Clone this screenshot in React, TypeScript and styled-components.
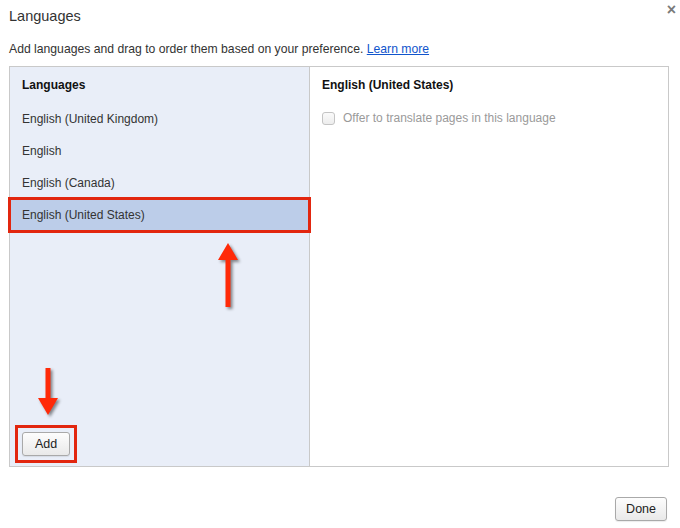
import React from "react";
import styled, { createGlobalStyle } from "styled-components";

const GlobalStyle = createGlobalStyle`
  html, body {
    margin: 0;
    padding: 0;
    background: #ffffff;
  }
  body {
    font-family: "Liberation Sans", Arial, Helvetica, sans-serif;
    color: #222;
  }
`;

const ANNOTATION_RED = "#e2260f";

const languages = [
  "English (United Kingdom)",
  "English",
  "English (Canada)",
  "English (United States)",
];

const selected = "English (United States)";

const Arrow = ({ direction }: { direction: "up" | "down" }) => (
  <svg width="32" height="72" viewBox="0 0 32 72">
    {direction === "up" ? (
      <path d="M16 3 L26 20 L18.5 20 L18.5 67 L13.5 67 L13.5 20 L6 20 Z" fill="#ff2a08" />
    ) : (
      <path d="M13.5 3 L18.5 3 L18.5 33 L26 33 L16 50 L6 33 L13.5 33 Z" fill="#ff2a08" />
    )}
  </svg>
);

const App = () => {
  return (
    <>
      <GlobalStyle />
      <Dialog>
        <Header>
          <Title>Languages</Title>
          <Close aria-label="close">×</Close>
        </Header>
        <Description>
          Add languages and drag to order them based on your preference.{" "}
          <a href="#">Learn more</a>
        </Description>

        <Panel>
          <LeftColumn>
            <ListHeader>Languages</ListHeader>
            {languages.map((lang) => (
              <LangRow key={lang} $active={lang === selected}>
                {lang}
              </LangRow>
            ))}
            <Spacer />
            <AddRow>
              <Highlight>
                <Button>Add</Button>
              </Highlight>
            </AddRow>

            <ArrowMark $left={202} $top={173}>
              <Arrow direction="up" />
            </ArrowMark>
            <ArrowMark $left={22} $top={298}>
              <Arrow direction="down" />
            </ArrowMark>
          </LeftColumn>

          <RightColumn>
            <DetailTitle>{selected}</DetailTitle>
            <CheckRow>
              <Checkbox type="checkbox" disabled />
              <span>Offer to translate pages in this language</span>
            </CheckRow>
          </RightColumn>
        </Panel>

        <Footer>
          <Button>Done</Button>
        </Footer>
      </Dialog>
    </>
  );
};

export default App;

const Dialog = styled.div`
  width: 680px;
  height: 528px;
  box-sizing: border-box;
  padding: 0 11px 0 9px;
  display: flex;
  flex-direction: column;
`;

const Header = styled.div`
  display: flex;
  justify-content: space-between;
  align-items: flex-start;
  padding-top: 8px;
`;

const Title = styled.h1`
  margin: 0;
  font-size: 14.5px;
  line-height: 16px;
  font-weight: normal;
  color: #333;
`;

const Close = styled.span`
  margin: -6px -7px 0 0;
  font-size: 16px;
  line-height: 16px;
  font-weight: bold;
  color: #7a7a7a;
`;

const Description = styled.p`
  margin: 18px 0 0;
  font-size: 12.2px;
  line-height: 15px;
  color: #333;

  a {
    color: #1155cc;
    text-decoration: underline;
  }
`;

const Panel = styled.div`
  margin-top: 9px;
  height: 401px;
  box-sizing: border-box;
  border: 1px solid #c9c9c9;
  display: grid;
  grid-template-columns: 300px 1fr;
`;

const LeftColumn = styled.div`
  position: relative;
  background: #e9eef8;
  border-right: 1px solid #c9c9c9;
  display: flex;
  flex-direction: column;
`;

const ListHeader = styled.div`
  height: 36px;
  line-height: 36px;
  padding-left: 12px;
  font-size: 12px;
  font-weight: bold;
  color: #111;
`;

const LangRow = styled.div<{ $active?: boolean }>`
  height: 32px;
  line-height: 32px;
  padding-left: 12px;
  font-size: 12px;
  color: #333;
  background: ${(p) => (p.$active ? "#bccde9" : "transparent")};
  outline: ${(p) => (p.$active ? `3px solid ${ANNOTATION_RED}` : "none")};
  outline-offset: -1px;
`;

const Spacer = styled.div`
  flex: 1;
`;

const AddRow = styled.div`
  padding: 0 0 3px 5px;
`;

const Highlight = styled.span`
  display: inline-block;
  padding: 4px;
  border: 3px solid ${ANNOTATION_RED};
  line-height: 0;
`;

const Button = styled.button`
  height: 24px;
  padding: 0 10px;
  min-width: 48px;
  font-family: "Liberation Sans", Arial, sans-serif;
  font-size: 12.5px;
  line-height: 22px;
  color: #222;
  border: 1px solid #a9a9a9;
  border-radius: 3px;
  background: linear-gradient(#fdfdfd, #e9e9e9);
  box-shadow: 0 1px 1px rgba(0, 0, 0, 0.08);
`;

const ArrowMark = styled.div<{ $left: number; $top: number }>`
  position: absolute;
  left: ${(p) => p.$left}px;
  top: ${(p) => p.$top}px;
  filter: drop-shadow(2px 2px 1.5px rgba(0, 0, 0, 0.45));
  line-height: 0;
`;

const RightColumn = styled.div`
  background: #fff;
  padding-left: 12px;
`;

const DetailTitle = styled.div`
  height: 36px;
  line-height: 36px;
  font-size: 12px;
  font-weight: bold;
  color: #111;
`;

const CheckRow = styled.label`
  display: flex;
  align-items: center;
  gap: 8px;
  height: 30px;
  font-size: 12px;
  color: #9a9a9a;
`;

const Checkbox = styled.input`
  appearance: none;
  margin: 0;
  width: 13px;
  height: 13px;
  box-sizing: border-box;
  border: 1px solid #c4c4c4;
  border-radius: 3px;
  background: linear-gradient(#fafafa, #ededed);
`;

const Footer = styled.div`
  display: flex;
  justify-content: flex-end;
  margin-top: 30px;
  margin-right: 2px;
`;
